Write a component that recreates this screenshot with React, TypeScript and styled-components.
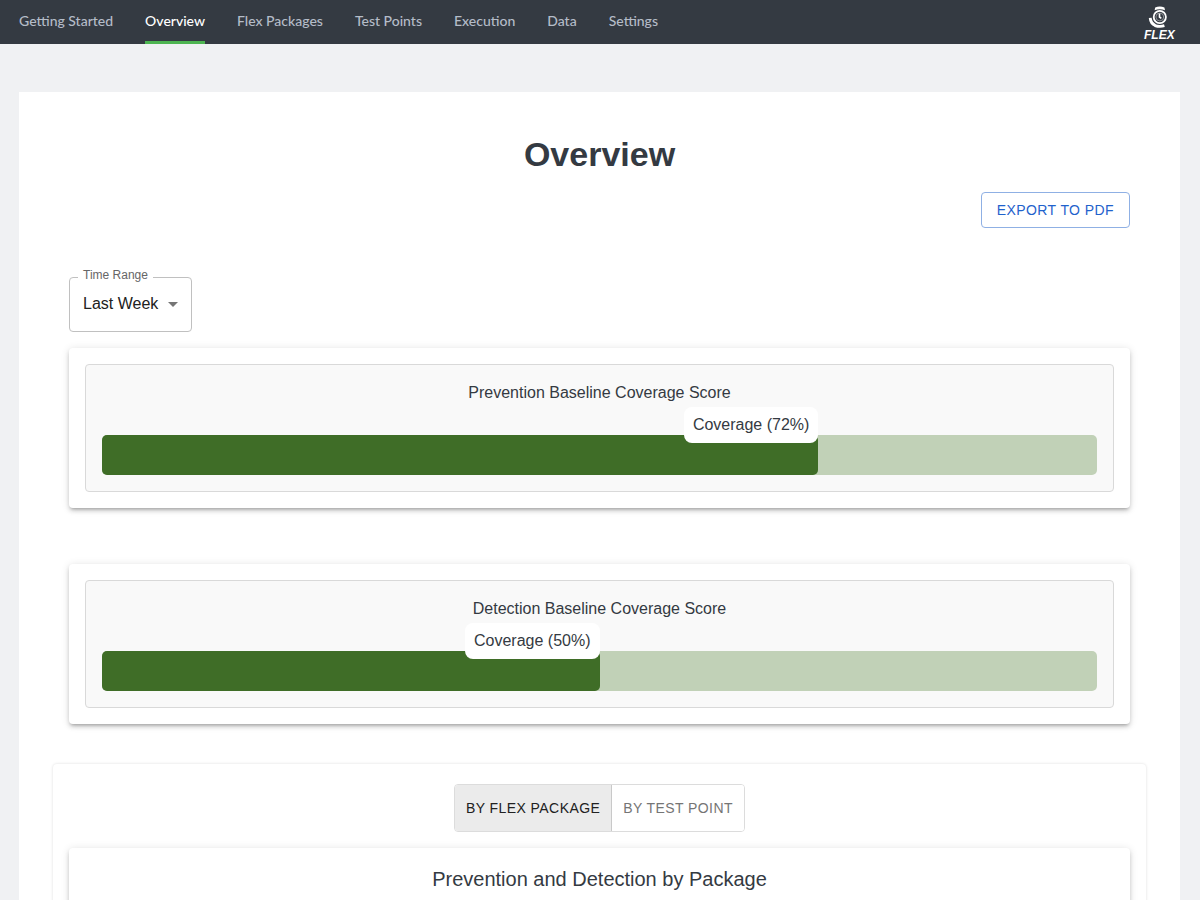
import React, { useState } from "react";
import styled, { createGlobalStyle } from "styled-components";

const GlobalStyle = createGlobalStyle`
  *, *::before, *::after { box-sizing: border-box; }
  body {
    margin: 0;
    background: #f0f1f3;
    color: #343a42;
    font-family: "Liberation Sans", Arial, sans-serif;
    font-size: 16px;
    line-height: 24px;
  }
  button, select { font-family: inherit; }
`;

const Page = styled.div`
  display: flex;
  flex-direction: column;
  height: 100vh;
`;

const NavBar = styled.header`
  display: flex;
  flex: none;
  align-items: stretch;
  justify-content: space-between;
  height: 44px;
  padding: 0 24px 0 19px;
  background: #343a42;
`;

const NavLinks = styled.nav`
  display: flex;
  gap: 32px;
`;

const NavLink = styled.a<{ $active?: boolean }>`
  display: flex;
  align-items: center;
  border-bottom: 3px solid ${(p) => (p.$active ? "#4db551" : "transparent")};
  color: ${(p) => (p.$active ? "#ffffff" : "#b4bcc8")};
  font-family: Lato, sans-serif;
  font-size: 14px;
  font-weight: 500;
  line-height: 20px;
  text-decoration: none;
  white-space: nowrap;
`;

const LogoLink = styled.a`
  display: flex;
  align-items: center;
  color: #ffffff;
`;

const Scroller = styled.div`
  flex: 1;
  min-height: 0;
  overflow-y: auto;
  scrollbar-width: none;
`;

const Content = styled.main`
  display: flex;
  flex-direction: column;
  margin: 48px 20px 48px 19px;
  padding: 40px 50px;
  background: #ffffff;
`;

const PageTitle = styled.h1`
  margin: 0;
  font-size: 34px;
  font-weight: 700;
  line-height: 44px;
  text-align: center;
`;

const ExportButton = styled.button`
  align-self: flex-end;
  height: 36px;
  margin-top: 16px;
  padding: 0 15px;
  border: 1px solid #8fb0e4;
  border-radius: 4px;
  background: #ffffff;
  color: #1f62cc;
  font-size: 14px;
  font-weight: 500;
  letter-spacing: 0.03em;
  text-transform: uppercase;
  cursor: pointer;
`;

const SelectField = styled.div`
  position: relative;
  align-self: flex-start;
  margin: 49px 0 16px;
`;

const SelectLabel = styled.label`
  position: absolute;
  top: -10px;
  left: 9px;
  padding: 0 5px;
  background: #ffffff;
  color: #666666;
  font-size: 12px;
  line-height: 16px;
`;

const Select = styled.select`
  appearance: none;
  display: block;
  width: 123px;
  height: 55px;
  padding: 0 24px 2px 13px;
  border: 1px solid #c0c0c0;
  border-radius: 4px;
  background: transparent;
  color: #212121;
  font-size: 16px;
`;

const SelectArrow = styled.svg`
  position: absolute;
  top: 25px;
  right: 14px;
  pointer-events: none;
`;

const Card = styled.section`
  padding: 16px;
  border-radius: 4px;
  background: #ffffff;
  box-shadow: 0 3px 3px -2px rgba(0, 0, 0, 0.2), 0 3px 4px 0 rgba(0, 0, 0, 0.14),
    0 1px 8px 0 rgba(0, 0, 0, 0.12);
`;

const ScoreStack = styled.div`
  display: flex;
  flex-direction: column;
  gap: 56px;
`;

const ScorePanel = styled.div`
  padding: 16px;
  border: 1px solid #d9d9d9;
  border-radius: 4px;
  background: #f9f9f9;
`;

const ScoreTitle = styled.h2`
  margin: 0 0 30px;
  font-size: 16px;
  font-weight: 400;
  line-height: 24px;
  text-align: center;
`;

const Track = styled.div`
  height: 40px;
  border-radius: 5px;
  background: #c1d1b7;
`;

const Fill = styled.div`
  position: relative;
  height: 40px;
  border-radius: 5px;
  background: #3f6d27;
`;

const FillLabel = styled.span`
  position: absolute;
  right: 0;
  bottom: 32px;
  padding: 6px 9px;
  border-radius: 8px;
  background: #ffffff;
  white-space: nowrap;
`;

const Breakdown = styled.section`
  display: flex;
  flex-direction: column;
  margin: 40px -16px 0;
  padding: 20px 16px 16px;
  border-radius: 4px;
  box-shadow: 0 0 3px rgba(0, 0, 0, 0.14);
`;

const ToggleGroup = styled.div`
  display: flex;
  align-self: center;
  margin-bottom: 16px;
  border: 1px solid #dcdcdc;
  border-radius: 4px;
  overflow: hidden;
`;

const ToggleButton = styled.button<{ $selected: boolean }>`
  height: 46px;
  padding: 0 11px;
  border: 0;
  background: ${(p) => (p.$selected ? "#ebebeb" : "#ffffff")};
  color: ${(p) => (p.$selected ? "#212121" : "#757575")};
  font-size: 14px;
  font-weight: 500;
  letter-spacing: 0.03em;
  text-transform: uppercase;
  cursor: pointer;

  & + & {
    border-left: 1px solid #c9c9c9;
  }
`;

const BreakdownCard = styled(Card)`
  min-height: 400px;
`;

const BreakdownTitle = styled.h2`
  margin: 0;
  font-size: 20px;
  font-weight: 400;
  line-height: 30px;
  text-align: center;
`;

const navItems = [
  "Getting Started",
  "Overview",
  "Flex Packages",
  "Test Points",
  "Execution",
  "Data",
  "Settings",
];

const scores = [
  { title: "Prevention Baseline Coverage Score", value: 72 },
  { title: "Detection Baseline Coverage Score", value: 50 },
];

const views = ["By Flex Package", "By Test Point"];

function Logo() {
  return (
    <svg width="36" height="44" viewBox="0 0 36 44" fill="none" role="img" aria-label="Flex">
      <path d="M14.6 10.2 15.2 7.4Q19.8 5.6 24.4 7.4L25 10.2Q19.8 8.4 14.6 10.2Z" fill="currentColor" />
      <circle cx="19.8" cy="17" r="6.1" stroke="currentColor" strokeWidth="1.8" />
      <circle cx="19.8" cy="17" r="3.9" stroke="currentColor" strokeWidth="0.7" opacity="0.6" />
      <path d="M19.5 13.6v3.4l1.8 1.4" stroke="currentColor" strokeWidth="1.6" />
      <path
        d="M8.8 18 11.6 17.7Q12.2 22.2 16 24.2L15 27Q9.2 24.6 8.8 18Z"
        fill="currentColor"
      />
      <path d="M15.4 24.2Q19.8 25.6 24 24.2L24.8 27Q19.8 28.6 14.6 26.9Z" fill="currentColor" />
      <text
        x="4"
        y="39"
        fill="currentColor"
        fontFamily="Liberation Sans, Arial, sans-serif"
        fontSize="12"
        fontStyle="italic"
        fontWeight="700"
      >
        FLEX
      </text>
    </svg>
  );
}

export default function App() {
  const [view, setView] = useState(views[0]);

  return (
    <Page>
      <GlobalStyle />
      <NavBar>
        <NavLinks>
          {navItems.map((item) => (
            <NavLink key={item} href="#" $active={item === "Overview"}>
              {item}
            </NavLink>
          ))}
        </NavLinks>
        <LogoLink href="#">
          <Logo />
        </LogoLink>
      </NavBar>
      <Scroller>
        <Content>
          <PageTitle>Overview</PageTitle>
          <ExportButton type="button">Export to PDF</ExportButton>
          <SelectField>
            <Select id="time-range" defaultValue="week">
              <option value="week">Last Week</option>
            </Select>
            <SelectLabel htmlFor="time-range">Time Range</SelectLabel>
            <SelectArrow width="10" height="5" viewBox="0 0 10 5" aria-hidden="true">
              <path d="M0 0h10L5 5z" fill="#757575" />
            </SelectArrow>
          </SelectField>
          <ScoreStack>
            {scores.map((score) => (
              <Card key={score.title}>
                <ScorePanel>
                  <ScoreTitle>{score.title}</ScoreTitle>
                  <Track>
                    <Fill style={{ width: `${score.value}%` }}>
                      <FillLabel>Coverage ({score.value}%)</FillLabel>
                    </Fill>
                  </Track>
                </ScorePanel>
              </Card>
            ))}
          </ScoreStack>
          <Breakdown>
            <ToggleGroup role="group" aria-label="Group results">
              {views.map((name) => (
                <ToggleButton
                  key={name}
                  type="button"
                  aria-pressed={view === name}
                  $selected={view === name}
                  onClick={() => setView(name)}
                >
                  {name}
                </ToggleButton>
              ))}
            </ToggleGroup>
            <BreakdownCard>
              <BreakdownTitle>Prevention and Detection by Package</BreakdownTitle>
            </BreakdownCard>
          </Breakdown>
        </Content>
      </Scroller>
    </Page>
  );
}
